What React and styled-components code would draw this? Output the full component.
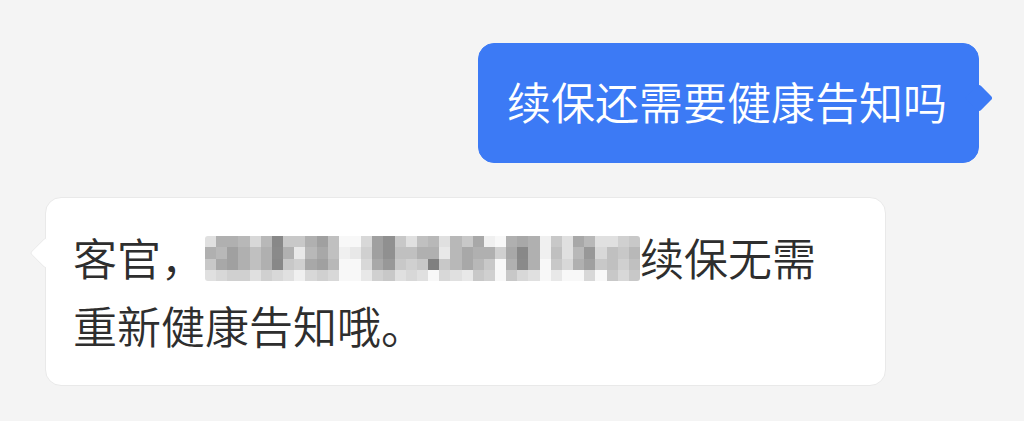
import React from "react";
import styled, { createGlobalStyle } from "styled-components";

const GlobalStyle = createGlobalStyle`
  html, body {
    margin: 0;
    padding: 0;
    background: #f4f4f4;
  }
  body {
    font-family: "Noto Sans CJK SC", "Noto Sans", sans-serif;
  }
`;

// mosaic grey levels, 4 rows x 39 columns (hex byte per cell)
const MOSAIC = [
  "e0 b0 b0 b8 d8 b8 88 c8 c8 b0 a0 c0 f8 f8 d8 a0 90 c8 e0 c0 b8 e0 b8 c8 a8 f0 f8 b0 a8 b0 f0 c8 e0 a8 b8 e0 e0 d0 c8",
  "b0 b8 a0 b0 c0 b0 8a b0 e8 b8 a8 c0 f0 e8 d0 a0 90 c0 c0 b0 b0 e8 b8 a8 b0 b0 d0 a8 88 b0 f0 c0 e0 b8 98 d8 c0 c8 b8",
  "c8 a8 a0 b0 c0 b0 88 c8 d0 a8 a0 b8 f8 f8 d8 a8 98 c8 d0 c8 80 c8 b8 a8 b8 c8 f8 b0 8a b0 f8 c8 d8 b0 a0 c8 c0 d0 c0",
  "e0 d8 d0 d0 e0 d0 d8 e0 f0 d8 d0 d8 f8 f8 e8 d0 c8 e0 d8 e0 f8 d8 e0 e8 c8 d0 f8 c8 d8 e0 f8 e8 f8 f8 d8 f8 c8 d8 c8",
].map((row) => row.split(" "));

const Chat = () => {
  return (
    <>
      <GlobalStyle />
      <Page>
        <Row $side="right">
          <Bubble $mine>续保还需要健康告知吗</Bubble>
        </Row>
        <Row $side="left">
          <Bubble $wide>
            客官，
            <Mosaic aria-hidden="true">
              <MosaicGrid>
                {MOSAIC.flatMap((row, r) =>
                  row.map((v, c) => (
                    <Cell key={`${r}-${c}`} style={{ background: `#${v}${v}${v}` }} />
                  ))
                )}
              </MosaicGrid>
            </Mosaic>
            续保无需
            <br />
            重新健康告知哦。
          </Bubble>
        </Row>
      </Page>
    </>
  );
};

export default Chat;

const Page = styled.div`
  display: flex;
  flex-direction: column;
  gap: 34px;
  padding: 43px 45px;
  min-height: 421px;
  box-sizing: border-box;
`;

const Row = styled.div`
  display: flex;
  justify-content: ${(p) => (p.$side === "right" ? "flex-end" : "flex-start")};
`;

const Bubble = styled.div`
  position: relative;
  box-sizing: border-box;
  width: ${(p) => (p.$wide ? "841px" : "auto")};
  padding: ${(p) => (p.$mine ? "23px 31px 27px 28px" : "25px 31px 26px 27px")};
  border-radius: 16px;
  font-size: 44px;
  font-weight: 350;
  line-height: 68px;
  white-space: nowrap;
  background: ${(p) => (p.$mine ? "#3c7af5" : "#ffffff")};
  color: ${(p) => (p.$mine ? "#ffffff" : "#2e2e2e")};
  border: 1px solid ${(p) => (p.$mine ? "#3c7af5" : "#e9e9e9")};

  &::after {
    content: "";
    position: absolute;
    box-sizing: border-box;
    width: ${(p) => (p.$mine ? "20px" : "22px")};
    height: ${(p) => (p.$mine ? "20px" : "22px")};
    top: 44px;
    ${(p) => (p.$mine ? "right: -11px;" : "left: -12px;")}
    background: inherit;
    border-radius: 3px;
    transform: rotate(45deg);
    ${(p) =>
      p.$mine
        ? ""
        : "border-left: 1px solid #e9e9e9; border-bottom: 1px solid #e9e9e9;"}
  }
`;

const Mosaic = styled.span`
  display: inline-block;
  width: 435px;
  height: 45px;
  vertical-align: -5px;
  border-radius: 3px;
  overflow: hidden;
`;

const MosaicGrid = styled.span`
  display: grid;
  grid-template-columns: repeat(39, 1fr);
  grid-template-rows: repeat(4, 1fr);
  width: 100%;
  height: 100%;
  filter: blur(0.4px);
`;

const Cell = styled.span`
  display: block;
`;
